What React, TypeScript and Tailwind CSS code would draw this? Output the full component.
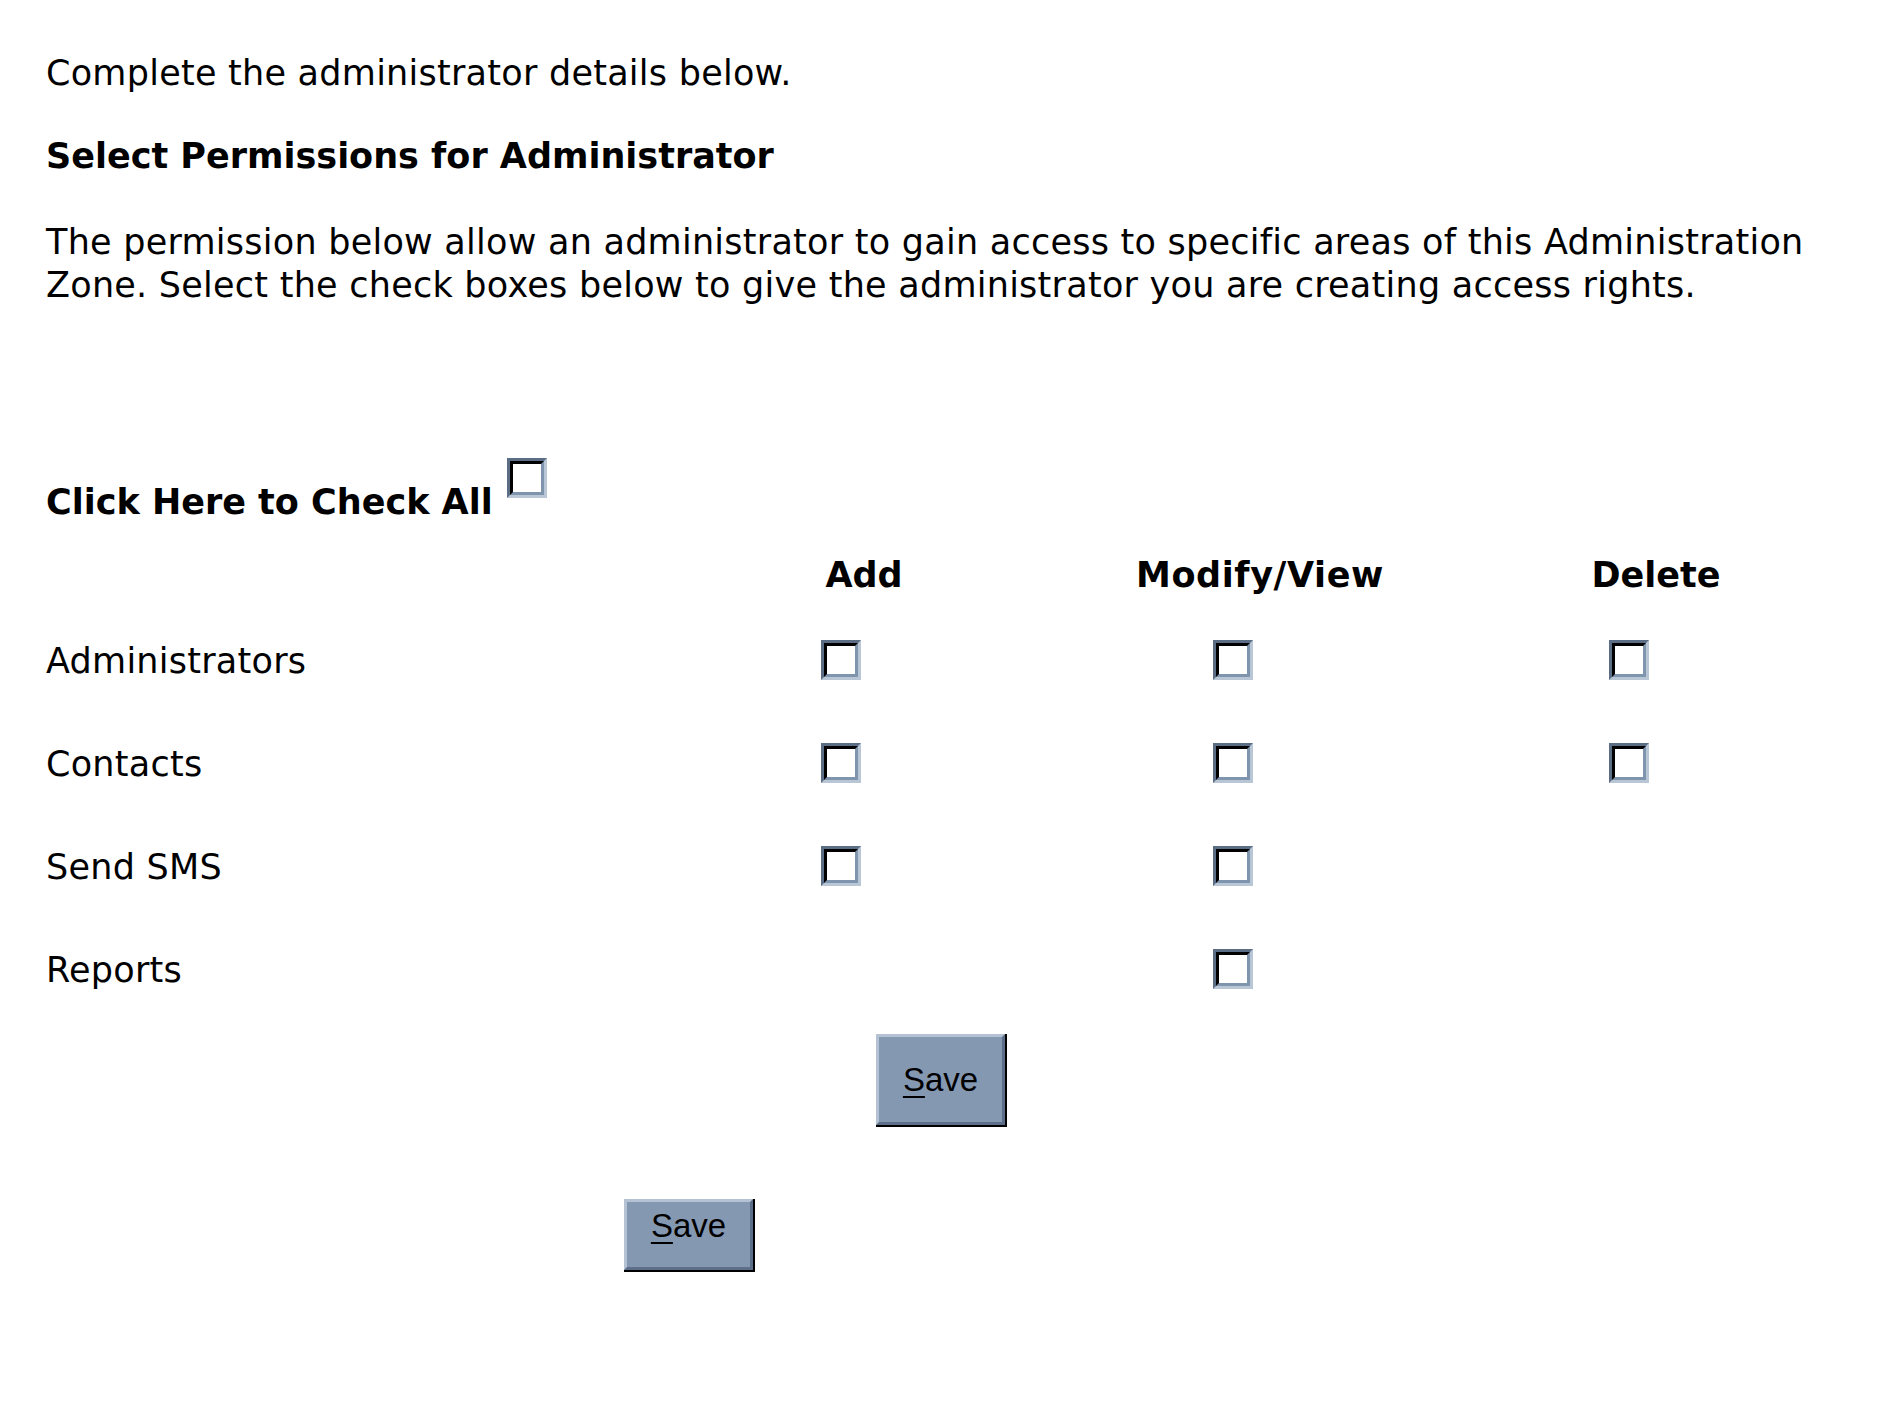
const font = { fontFamily: '"DejaVu Sans", Verdana, sans-serif' }

const CheckBox = () => (
  <div className="w-[40px] h-[40px] border-[3px] border-t-[#5b6e86] border-l-[#5b6e86] border-b-[#b9c6d6] border-r-[#b9c6d6]">
    <div className="w-full h-full bg-white border-[3px] border-t-black border-l-black border-b-[#7f94ad] border-r-[#7f94ad]" />
  </div>
)

const SaveButton = ({ h, pad }: { h: string; pad: string }) => (
  <div className={`w-[131px] ${h} border-b-2 border-r-2 border-black`}>
    <div className={`w-full h-full bg-[#8598b1] border-[3px] border-t-[#b4c2d3] border-l-[#b4c2d3] border-b-[#5d6f88] border-r-[#5d6f88] flex items-center justify-center ${pad}`}>
      <span className="text-[33px] text-black leading-none" style={{ fontFamily: '"Liberation Sans", Arial, sans-serif' }}>
        <span className="underline underline-offset-[5px] decoration-2">S</span>ave
      </span>
    </div>
  </div>
)

const rows: { label: string; add: boolean; modify: boolean; del: boolean }[] = [
  { label: 'Administrators', add: true, modify: true, del: true },
  { label: 'Contacts', add: true, modify: true, del: true },
  { label: 'Send SMS', add: true, modify: true, del: false },
  { label: 'Reports', add: false, modify: true, del: false },
]

export default function App() {
  return (
    <div className="w-[1890px] min-h-[1404px] bg-white text-black pl-[46px] pt-[52px]" style={font}>
      <p className="text-[35px] leading-[43px] tracking-[0.25px]">Complete the administrator details below.</p>
      <h2 className="text-[35px] leading-[43px] font-bold mt-[40px]">Select Permissions for Administrator</h2>
      <p className="text-[35px] leading-[43px] tracking-[0.25px] mt-[43px] pr-[40px]">
        The permission below allow an administrator to gain access to specific areas of this Administration Zone. Select the check boxes below to give the administrator you are creating access rights.
      </p>

      <div className="flex items-start gap-[14px] mt-[151px]">
        <span className="text-[35px] leading-[43px] font-bold mt-[23px]">Click Here to Check All</span>
        <CheckBox />
      </div>

      <div className="grid grid-cols-[620px_396px_396px_396px] mt-[17px]">
        <div className="h-[69px]" />
        <div className="h-[69px] flex items-center justify-center text-[35px] font-bold">Add</div>
        <div className="h-[69px] flex items-center justify-center text-[35px] font-bold tracking-[0.6px]">Modify/View</div>
        <div className="h-[69px] flex items-center justify-center text-[35px] font-bold">Delete</div>
        {rows.map((r) => (
          <>
            <div key={r.label} className="h-[103px] flex items-center text-[35px] tracking-[0.25px]">{r.label}</div>
            <div className="h-[103px] flex items-center justify-center pr-[46px] pb-[4px]">{r.add && <CheckBox />}</div>
            <div className="h-[103px] flex items-center justify-center pr-[54px] pb-[4px]">{r.modify && <CheckBox />}</div>
            <div className="h-[103px] flex items-center justify-center pr-[54px] pb-[4px]">{r.del && <CheckBox />}</div>
          </>
        ))}
      </div>

      <div className="ml-[830px] mt-[12px]">
        <SaveButton h="h-[93px]" pad="" />
      </div>
      <div className="ml-[578px] mt-[72px]">
        <SaveButton h="h-[73px]" pad="pb-[18px]" />
      </div>
    </div>
  )
}
